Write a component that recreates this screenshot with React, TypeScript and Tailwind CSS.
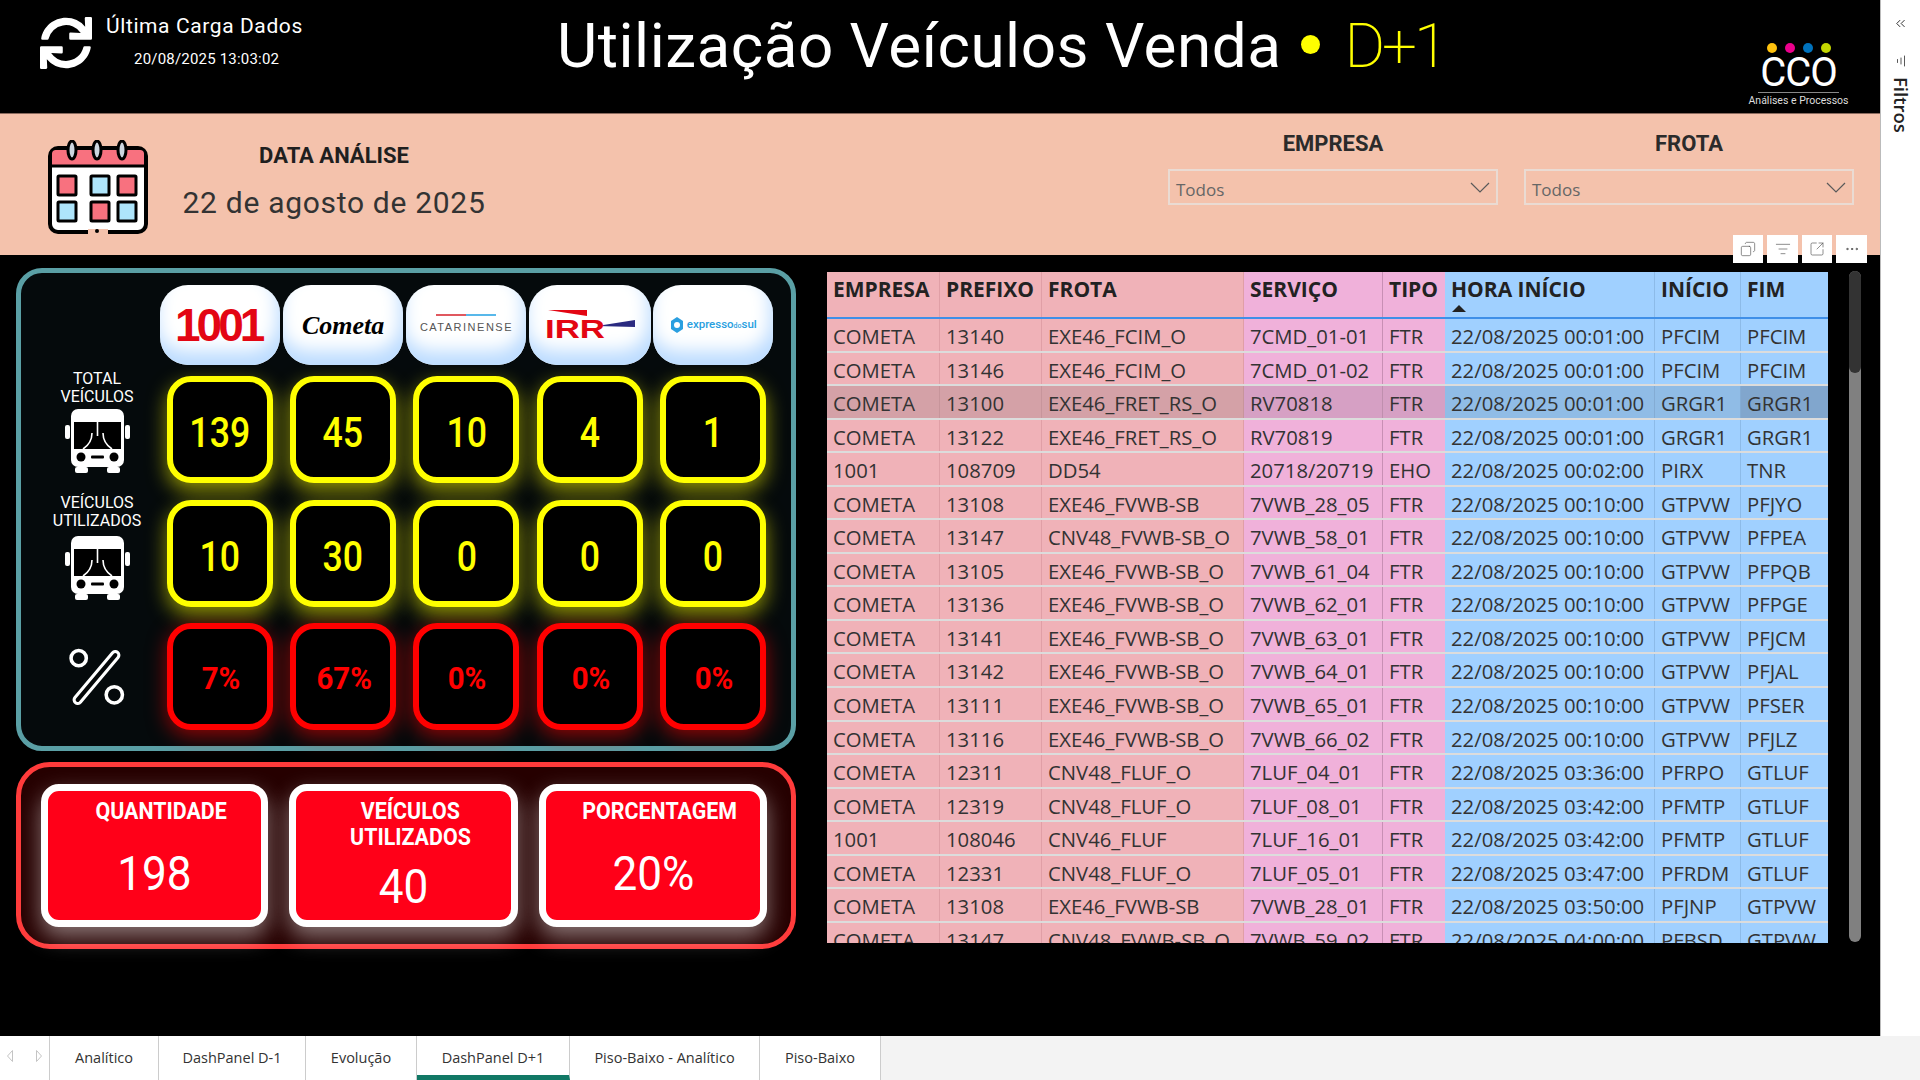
import { Copy, ListFilter, SquareArrowOutUpRight, Ellipsis, ChevronsLeft } from 'lucide-react';
import { FaSync } from 'react-icons/fa';

const rows = [
  ['COMETA', '13140', 'EXE46_FCIM_O', '7CMD_01-01', 'FTR', '22/08/2025 00:01:00', 'PFCIM', 'PFCIM'],
  ['COMETA', '13146', 'EXE46_FCIM_O', '7CMD_01-02', 'FTR', '22/08/2025 00:01:00', 'PFCIM', 'PFCIM'],
  ['COMETA', '13100', 'EXE46_FRET_RS_O', 'RV70818', 'FTR', '22/08/2025 00:01:00', 'GRGR1', 'GRGR1'],
  ['COMETA', '13122', 'EXE46_FRET_RS_O', 'RV70819', 'FTR', '22/08/2025 00:01:00', 'GRGR1', 'GRGR1'],
  ['1001', '108709', 'DD54', '20718/20719', 'EHO', '22/08/2025 00:02:00', 'PIRX', 'TNR'],
  ['COMETA', '13108', 'EXE46_FVWB-SB', '7VWB_28_05', 'FTR', '22/08/2025 00:10:00', 'GTPVW', 'PFJYO'],
  ['COMETA', '13147', 'CNV48_FVWB-SB_O', '7VWB_58_01', 'FTR', '22/08/2025 00:10:00', 'GTPVW', 'PFPEA'],
  ['COMETA', '13105', 'EXE46_FVWB-SB_O', '7VWB_61_04', 'FTR', '22/08/2025 00:10:00', 'GTPVW', 'PFPQB'],
  ['COMETA', '13136', 'EXE46_FVWB-SB_O', '7VWB_62_01', 'FTR', '22/08/2025 00:10:00', 'GTPVW', 'PFPGE'],
  ['COMETA', '13141', 'EXE46_FVWB-SB_O', '7VWB_63_01', 'FTR', '22/08/2025 00:10:00', 'GTPVW', 'PFJCM'],
  ['COMETA', '13142', 'EXE46_FVWB-SB_O', '7VWB_64_01', 'FTR', '22/08/2025 00:10:00', 'GTPVW', 'PFJAL'],
  ['COMETA', '13111', 'EXE46_FVWB-SB_O', '7VWB_65_01', 'FTR', '22/08/2025 00:10:00', 'GTPVW', 'PFSER'],
  ['COMETA', '13116', 'EXE46_FVWB-SB_O', '7VWB_66_02', 'FTR', '22/08/2025 00:10:00', 'GTPVW', 'PFJLZ'],
  ['COMETA', '12311', 'CNV48_FLUF_O', '7LUF_04_01', 'FTR', '22/08/2025 03:36:00', 'PFRPO', 'GTLUF'],
  ['COMETA', '12319', 'CNV48_FLUF_O', '7LUF_08_01', 'FTR', '22/08/2025 03:42:00', 'PFMTP', 'GTLUF'],
  ['1001', '108046', 'CNV46_FLUF', '7LUF_16_01', 'FTR', '22/08/2025 03:42:00', 'PFMTP', 'GTLUF'],
  ['COMETA', '12331', 'CNV48_FLUF_O', '7LUF_05_01', 'FTR', '22/08/2025 03:47:00', 'PFRDM', 'GTLUF'],
  ['COMETA', '13108', 'EXE46_FVWB-SB', '7VWB_28_01', 'FTR', '22/08/2025 03:50:00', 'PFJNP', 'GTPVW'],
  ['COMETA', '13147', 'CNV48_FVWB-SB_O', '7VWB_59_02', 'FTR', '22/08/2025 04:00:00', 'PFBSD', 'GTPVW'],
];

const headers = ['EMPRESA', 'PREFIXO', 'FROTA', 'SERVIÇO', 'TIPO', 'HORA INÍCIO', 'INÍCIO', 'FIM'];

// column tint, one per table column
const colBg = [
  'bg-[#f0b2b8] border-[#e09fa6]',
  'bg-[#f0b2b8] border-[#e09fa6]',
  'bg-[#f0b2b8] border-[#e09fa6]',
  'bg-[#f0b1da] border-[#c88fb4]',
  'bg-[#f0b1da] border-[#f0b1da]',
  'bg-[#a0d0ff] border-[#8dbbe8]',
  'bg-[#a0d0ff] border-[#8dbbe8]',
  'bg-[#a0d0ff] border-[#a0d0ff]',
];

const selectedBg = [
  'bg-[#d4a1a7] border-[#c7959b]',
  'bg-[#d4a1a7] border-[#c7959b]',
  'bg-[#d4a1a7] border-[#c7959b]',
  'bg-[#d6a0c4] border-[#bf8fae]',
  'bg-[#d6a0c4] border-[#d6a0c4]',
  'bg-[#90bce6] border-[#84acd4]',
  'bg-[#90bce6] border-[#84acd4]',
  'bg-[#81a6cd] border-[#81a6cd]',
];

const gridCols = 'grid grid-cols-[113px_102px_202px_139px_62px_210px_86px_87px]';

const tabs = [
  { label: 'Analítico', w: 'w-[109px]' },
  { label: 'DashPanel D-1', w: 'w-[147px]' },
  { label: 'Evolução', w: 'w-[111px]' },
  { label: 'DashPanel D+1', w: 'w-[153px]', active: true },
  { label: 'Piso-Baixo - Analítico', w: 'w-[190px]' },
  { label: 'Piso-Baixo', w: 'w-[121px]' },
];

function BusIcon() {
  return (
    <svg width="65" height="64" viewBox="0 0 65 64">
      <rect x="6" y="0" width="53" height="58" rx="7" fill="#fff" />
      <rect x="0" y="16" width="5" height="14" rx="2" fill="#fff" />
      <rect x="60" y="16" width="5" height="14" rx="2" fill="#fff" />
      <rect x="10" y="58" width="13" height="6" rx="2" fill="#fff" />
      <rect x="42" y="58" width="13" height="6" rx="2" fill="#fff" />
      <rect x="9" y="13" width="47" height="27" fill="#000" />
      <path d="M32.5 13v14M27 24c0 7-3 12-9 16M38 24c0 7 3 12 9 16" fill="none" stroke="#fff" strokeWidth="1.6" />
      <circle cx="16" cy="48" r="4.5" fill="#000" />
      <circle cx="49" cy="48" r="4.5" fill="#000" />
      <rect x="26" y="46.5" width="13" height="3" rx="1" fill="#000" />
    </svg>
  );
}

function PercentIcon() {
  return (
    <svg width="58" height="58" viewBox="0 0 56 57" fill="none">
      <circle cx="10" cy="10" r="7.5" stroke="#fff" strokeWidth="3.5" />
      <circle cx="45" cy="46" r="8" stroke="#fff" strokeWidth="3.5" />
      <path d="M46 7 9 51" stroke="#fff" strokeWidth="10" strokeLinecap="round" />
      <path d="M46 7 9 51" stroke="#050809" strokeWidth="4" strokeLinecap="round" />
    </svg>
  );
}

function CalendarIcon() {
  const squares = [
    [10, 36, '#f8717f'],
    [43, 36, '#aee5fb'],
    [70, 36, '#f8717f'],
    [10, 62, '#aee5fb'],
    [43, 62, '#f8717f'],
    [70, 62, '#aee5fb'],
  ] as const;
  return (
    <svg width="100" height="94" viewBox="0 0 100 94" className="shrink-0">
      <rect x="2" y="8" width="96" height="84" rx="8" fill="#fff" stroke="#000" strokeWidth="4" />
      <path d="M4 25V14a4 4 0 0 1 4-4h84a4 4 0 0 1 4 4v11z" fill="#f8717f" />
      <path d="M3 26h94" stroke="#000" strokeWidth="3" />
      {[24, 49, 74].map((cx) => (
        <ellipse key={cx} cx={cx} cy="10" rx="4" ry="9" fill="#ccd6e0" stroke="#000" strokeWidth="3" />
      ))}
      {squares.map(([x, y, fill]) => (
        <rect key={`${x}-${y}`} x={x} y={y} width="18" height="19" fill={fill} stroke="#000" strokeWidth="3" rx="1" />
      ))}
      <rect x="40" y="89" width="20" height="5" fill="#f4c2ac" />
      <circle cx="49" cy="91" r="2" fill="#000" />
    </svg>
  );
}

function Chevron() {
  return (
    <svg width="20" height="11" viewBox="0 0 20 11" fill="none">
      <path d="M1 1l9 9 9-9" stroke="#5a5a5a" strokeWidth="1.2" />
    </svg>
  );
}

function Logo({ children, w }: { children: React.ReactNode; w: string }) {
  return (
    <div className={`${w} h-[80px] rounded-[28px] bg-white flex items-center justify-center overflow-hidden shadow-[inset_-3px_-14px_18px_#bcdcff]`}>
      {children}
    </div>
  );
}

function Selector({ label }: { label: string }) {
  return (
    <div className="w-[330px] flex flex-col items-center">
      <div className="mt-[15px] h-[30px] text-[22px] font-bold leading-[30px] text-[#2b2b2b]">{label}</div>
      <div className="mt-[10px] w-full h-[36px] border-2 border-[#eadbd3] flex items-center justify-between pl-[6px] pr-[6px]">
        <span className="font-['Open_Sans',sans-serif] text-[17px] pt-[5px] text-[#666]">Todos</span>
        <Chevron />
      </div>
    </div>
  );
}

function MetricCell({ value, tone }: { value: string; tone: 'yellow' | 'red' }) {
  const yellow = tone === 'yellow';
  return (
    <div
      className={
        yellow
          ? 'w-[106px] h-[107px] justify-self-center self-start bg-black border-[6px] border-[#ffff00] rounded-[24px] flex items-center justify-center pt-[6px] text-[#ffff00] text-[42px] font-medium shadow-[0_8px_20px_rgba(255,255,0,0.55)]'
          : 'w-[106px] h-[107px] justify-self-center self-start bg-black border-[6px] border-[#ff0000] rounded-[24px] flex items-center justify-center pt-[2px] pl-[2px] text-[#ff0000] text-[32px] font-bold shadow-[0_6px_20px_rgba(255,0,0,0.55)]'
      }
    >
      <span className={yellow ? 'inline-block scale-x-[0.85]' : 'inline-block scale-x-[0.92]'}>{value}</span>
    </div>
  );
}

function TotalCard({ title, value, w }: { title: string[]; value: string; w: string }) {
  return (
    <div className={`${w} h-[143px] bg-[#ff0018] border-[7px] border-white rounded-[18px] flex flex-col items-center text-white shadow-[0_10px_22px_rgba(255,255,255,0.45)]`}>
      <div className="mt-[8px] pl-[14px] text-[23px] font-bold leading-[26px] text-center scale-x-[0.93]">
        {title.map((t) => (
          <div key={t}>{t}</div>
        ))}
      </div>
      <div className={`${title.length > 1 ? 'mt-[6px]' : 'mt-[19px]'} text-[49px] leading-[60px] scale-x-[0.9]`}>{value}</div>
    </div>
  );
}

export default function App() {
  return (
    <div className="w-[1920px] h-[1080px] overflow-hidden flex flex-col bg-black font-['Roboto',sans-serif]">
      <div className="flex h-[1036px]">
        <div className="relative w-[1880px] flex flex-col">
          {/* Header */}
          <div className="h-[113px] flex text-white">
            <div className="w-[557px] pl-[40px] pt-[17px] flex">
              <FaSync size={52} color="#fff" />
              <div className="ml-[14px] flex flex-col">
                <div className="text-[21px] leading-[24px] -mt-[3px] tracking-[0.6px]">Última Carga Dados</div>
                <div className="mt-[12px] ml-[28px] text-[15px] leading-[18px] tracking-[0.2px]">20/08/2025 13:03:02</div>
              </div>
            </div>
            <div className="pt-[8px] h-[84px] flex items-center text-[62px] leading-[76px] whitespace-nowrap">
              <span className="tracking-[0.5px]">Utilização Veículos Venda</span>
              <span className="ml-[20px] -mt-[4px] w-[19px] h-[19px] rounded-full bg-[#ffff00]" />
              <span className="ml-[24px] text-[#ffff00] font-extralight tracking-[-3px]">D+1</span>
            </div>
            <div className="ml-auto mr-[33px] w-[97px] flex flex-col items-center pt-[43px]">
              <div className="flex gap-[8px]">
                <span className="w-[10px] h-[10px] rounded-full bg-[#ffc20e]" />
                <span className="w-[10px] h-[10px] rounded-full bg-[#ec008c]" />
                <span className="w-[10px] h-[10px] rounded-full bg-[#0072bc]" />
                <span className="w-[10px] h-[10px] rounded-full bg-[#c4d600]" />
              </div>
              <div className="text-[40px] leading-[32px] mt-[4px] tracking-[-1px]">CCO</div>
              <div className="w-[81px] h-px bg-[#888] mt-[3px]" />
              <div className="text-[10.5px] leading-[13px] mt-[1px] whitespace-nowrap text-[#ddd]">Análises e Processos</div>
            </div>
          </div>

          {/* Filters band */}
          <div className="h-[142px] bg-[#f4c2ac] border-t border-[#8a6a5e] flex">
            <div className="ml-[48px] mt-[26px]">
              <CalendarIcon />
            </div>
            <div className="ml-[34px] w-[304px] flex flex-col items-center">
              <div className="mt-[28px] text-[22px] font-bold leading-[28px] text-[#1f1f1f]">DATA ANÁLISE</div>
              <div className="mt-[13px] text-[30px] leading-[40px] tracking-[0.7px] text-[#333] whitespace-nowrap">22 de agosto de 2025</div>
            </div>
            <div className="ml-auto mr-[26px] flex gap-[26px]">
              <Selector label="EMPRESA" />
              <Selector label="FROTA" />
            </div>
          </div>

          {/* Content */}
          <div className="flex-1 flex">
            <div className="ml-[16px] w-[780px] shrink-0 flex flex-col">
              <div className="mt-[13px] h-[483px] border-[5px] border-[#5a9fa5] rounded-[26px] bg-[#050a0c] pt-[12px] grid grid-cols-[137px_repeat(5,123.4px)] grid-rows-[91px_124px_123px_106px]">
                <div />
                <div className="justify-self-center">
                  <Logo w="w-[120px]">
                    <span className="font-['Liberation_Sans',sans-serif] font-bold text-[#e30613] text-[46px] tracking-[-4px] -ml-[3px]">1001</span>
                  </Logo>
                </div>
                <div className="justify-self-center">
                  <Logo w="w-[120px]">
                    <span className="font-['Liberation_Serif',serif] font-bold italic text-black text-[26px]">Cometa</span>
                  </Logo>
                </div>
                <div className="justify-self-center">
                  <Logo w="w-[120px]">
                    <div className="flex flex-col items-center">
                      <div className="flex">
                        <span className="w-[30px] h-[2px] bg-[#e0585f]" />
                        <span className="w-[30px] h-[2px] bg-[#58b8ea]" />
                      </div>
                      <span className="font-['Liberation_Sans',sans-serif] text-[#555] text-[11px] tracking-[1.5px] mt-[3px]">CATARINENSE</span>
                    </div>
                  </Logo>
                </div>
                <div className="justify-self-center">
                  <Logo w="w-[122px]">
                    <svg width="90" height="30" viewBox="0 0 90 30">
                      <polygon points="3,0 42,0 42,6" fill="#e30613" />
                      <polygon points="52,16 90,10 90,17" fill="#2a2a80" />
                      <text x="0" y="28" fontFamily="Liberation Sans" fontWeight="700" fontSize="25" fill="#e30613" textLength="60" lengthAdjust="spacingAndGlyphs">IRR</text>
                    </svg>
                  </Logo>
                </div>
                <div className="justify-self-center">
                  <Logo w="w-[120px]">
                    <div className="flex items-center gap-[3px] text-[#2a9fe0]">
                      <svg width="14" height="16" viewBox="0 0 14 16">
                        <polygon points="7,0 13,4 13,12 7,16 1,12 1,4" fill="#2a9fe0" />
                        <circle cx="7" cy="8" r="3" fill="#fff" />
                      </svg>
                      <span className="text-[11.5px] font-medium whitespace-nowrap">
                        expresso<span className="text-[7px]">do</span>sul
                      </span>
                    </div>
                  </Logo>
                </div>

                <div className="pl-[15px] -mt-[6px] flex flex-col items-center text-white text-[16px] leading-[18px] text-center">
                  <div>TOTAL</div>
                  <div>VEÍCULOS</div>
                  <div className="mt-[3px]">
                    <BusIcon />
                  </div>
                </div>
                {['139', '45', '10', '4', '1'].map((v, i) => (
                  <MetricCell key={i} value={v} tone="yellow" />
                ))}

                <div className="pl-[15px] -mt-[6px] flex flex-col items-center text-white text-[16px] leading-[18px] text-center">
                  <div>VEÍCULOS</div>
                  <div>UTILIZADOS</div>
                  <div className="mt-[6px]">
                    <BusIcon />
                  </div>
                </div>
                {['10', '30', '0', '0', '0'].map((v, i) => (
                  <MetricCell key={i} value={v} tone="yellow" />
                ))}

                <div className="pl-[15px] pt-[25px] flex justify-center">
                  <PercentIcon />
                </div>
                {['7%', '67%', '0%', '0%', '0%'].map((v, i) => (
                  <MetricCell key={i} value={v} tone="red" />
                ))}
              </div>

              <div className="mt-[11px] h-[187px] border-[5px] border-[#ff3b3b] rounded-[34px] bg-[#260000] pl-[20px] pt-[17px] flex gap-[21px]">
                <TotalCard title={['QUANTIDADE']} value="198" w="w-[227px]" />
                <TotalCard title={['VEÍCULOS', 'UTILIZADOS']} value="40" w="w-[229px]" />
                <TotalCard title={['PORCENTAGEM']} value="20%" w="w-[228px]" />
              </div>
            </div>

            {/* Table */}
            <div className="ml-[31px] mt-[17px] w-[1001px] h-[671px] overflow-hidden font-['Open_Sans',sans-serif] text-[20.3px] text-[#333] whitespace-nowrap">
              <div className={`${gridCols} h-[47px] border-b-2 border-[#3f8fe8]`}>
                {headers.map((h, i) => (
                  <div key={h} className={`${colBg[i]} relative border-r px-[6px] pt-[3px] font-bold text-[21px] text-[#222] leading-[28px]`}>
                    {h}
                    {h === 'HORA INÍCIO' && (
                      <span className="absolute left-[7px] top-[33px] w-0 h-0 border-x-[7px] border-x-transparent border-b-[7px] border-b-[#222]" />
                    )}
                  </div>
                ))}
              </div>
              {rows.map((r, ri) => (
                <div key={ri} className={`${gridCols} h-[33.55px] border-b-2 border-[#dcdcdc]`}>
                  {r.map((c, ci) => (
                    <div key={ci} className={`${ri === 2 ? selectedBg[ci] : colBg[ci]} border-r px-[6px] pt-[3px] leading-[28px]`}>
                      {c}
                    </div>
                  ))}
                </div>
              ))}
            </div>

            {/* Scrollbar */}
            <div className="ml-[21px] mt-[16px] w-[12px] h-[671px] rounded-full bg-[#808080]">
              <div className="h-[102px] rounded-full bg-[#333]" />
            </div>
          </div>

          {/* Visual header overlay */}
          <div className="absolute left-[1733px] top-[235px] flex gap-[4px] text-[#555]">
            <div className="w-[30px] h-[28px] bg-white flex items-center justify-center"><Copy size={16} strokeWidth={1} className="-scale-x-100" /></div>
            <div className="w-[31px] h-[28px] bg-white flex items-center justify-center"><ListFilter size={16} strokeWidth={1} /></div>
            <div className="w-[30px] h-[28px] bg-white flex items-center justify-center"><SquareArrowOutUpRight size={16} strokeWidth={1} /></div>
            <div className="w-[31px] h-[28px] bg-white flex items-center justify-center"><Ellipsis size={16} strokeWidth={1.5} /></div>
          </div>
        </div>

        {/* Filters pane */}
        <div className="w-[40px] bg-white border-l border-[#bbb] flex flex-col items-center text-[#222]">
          <ChevronsLeft size={15} strokeWidth={1.5} className="mt-[16px]" />
          <ListFilter size={12} strokeWidth={1.5} className="mt-[24px] rotate-90" />
          <div className="mt-[10px] [writing-mode:vertical-rl] font-['Open_Sans',sans-serif] font-semibold text-[18.5px] leading-[22px]">Filtros</div>
        </div>
      </div>

      {/* Page tabs */}
      <div className="h-[44px] bg-[#f3f3f3] flex font-['Open_Sans',sans-serif] text-[14.5px] text-[#333]">
        <div className="w-[50px] bg-white border-r border-[#ccc] flex items-center justify-between px-[7px] pb-[4px]">
          <svg width="6" height="12" viewBox="0 0 6 12"><polygon points="5.5,0.5 0.5,6 5.5,11.5" fill="none" stroke="#c4c4c4" /></svg>
          <svg width="6" height="12" viewBox="0 0 6 12"><polygon points="0.5,0.5 5.5,6 0.5,11.5" fill="none" stroke="#c4c4c4" /></svg>
        </div>
        {tabs.map((t) => (
          <div
            key={t.label}
            className={`${t.w} bg-white border-r border-[#ccc] flex items-center justify-center whitespace-nowrap ${t.active ? 'border-b-[5px] border-b-[#117865] font-medium pt-[4px]' : ''}`}
          >
            {t.label}
          </div>
        ))}
      </div>
    </div>
  );
}
